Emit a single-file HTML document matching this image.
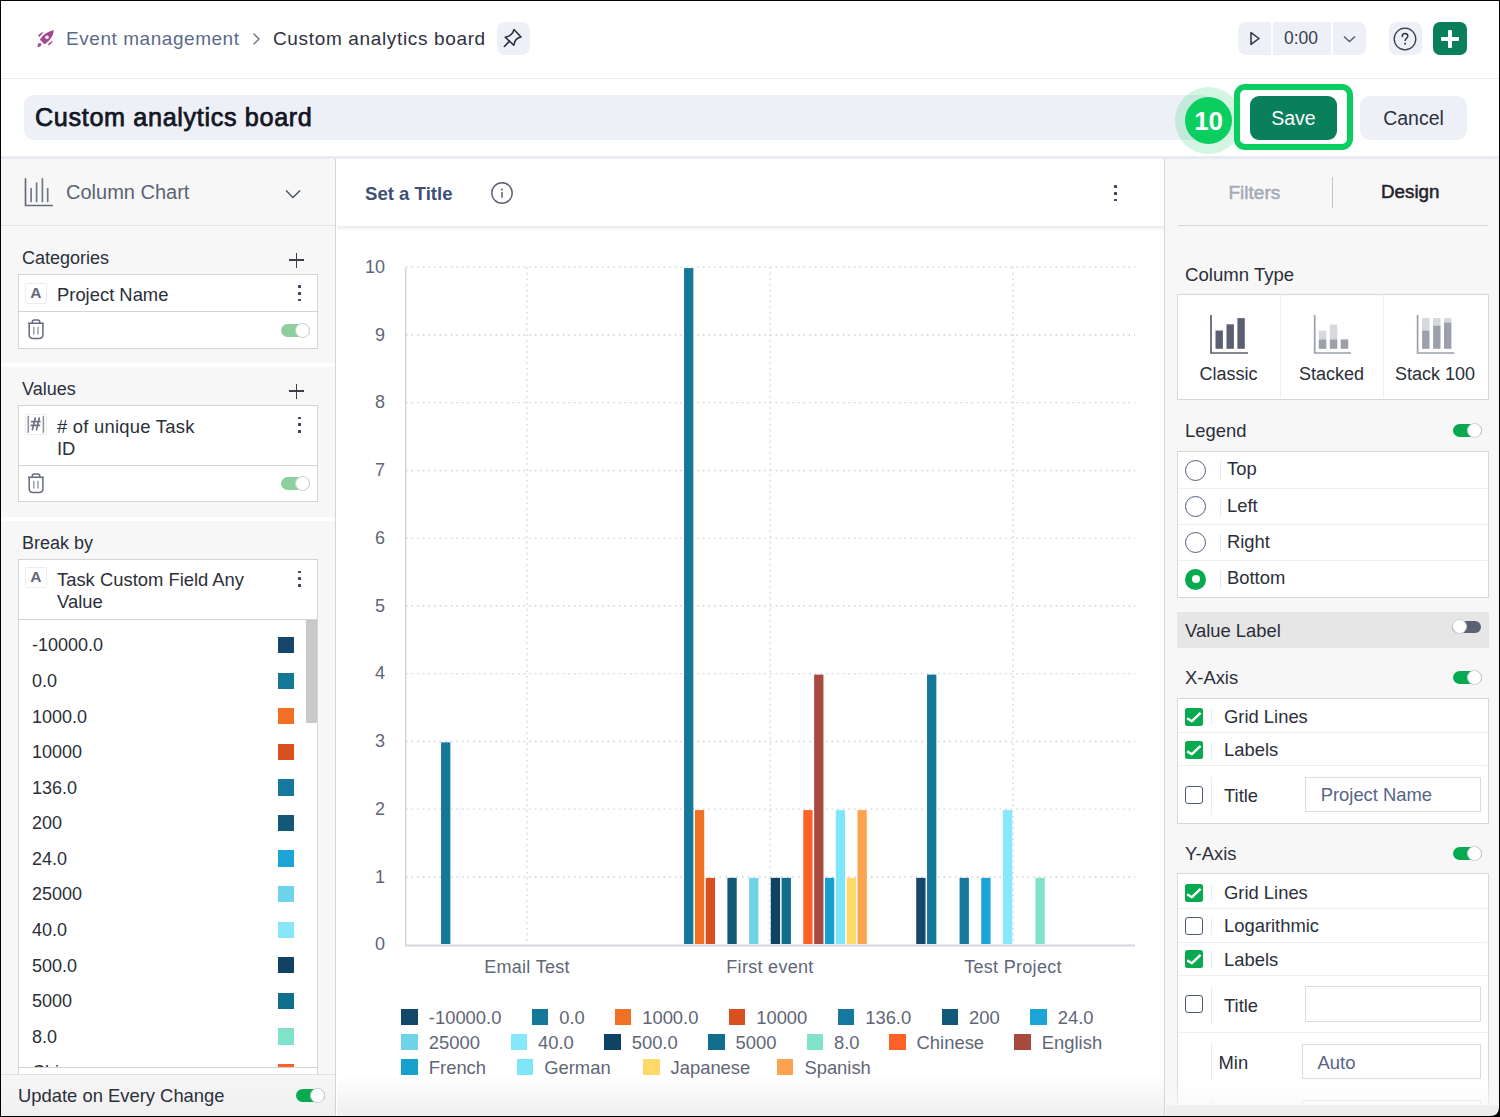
<!DOCTYPE html><html><head><meta charset="utf-8"><style>
*{box-sizing:border-box;margin:0;padding:0}
html,body{width:1500px;height:1117px;overflow:hidden;background:#fff}
body{position:relative;font-family:"Liberation Sans",sans-serif;color:#2b2f3a}
.a{position:absolute}
.t{position:absolute;white-space:nowrap;line-height:1}
</style></head><body>
<div class="a" style="left:0;top:78px;width:1500px;height:1px;background:#e6eaf1"></div>
<svg class="a" style="left:32px;top:25px" width="28" height="28" viewBox="0 0 28 28">
<path d="M21.9 5.3 C15.5 6.2 10.8 10 7.9 14.8 L12.4 19.3 C17 16.6 21 12 21.9 5.3 Z" fill="#a14a91"/>
<circle cx="15" cy="12.3" r="1.75" fill="#fff"/>
<path d="M6.1 10.9 C7.2 8.9 9.2 7.4 11.7 7.1 L7.3 11.9 Z" fill="#a14a91"/>
<path d="M20.7 15.2 C20.4 17.6 18.9 19.4 16.7 20.3 L15.9 19.3 Z" fill="#a14a91"/>
<path d="M5.6 21.9 C5.4 19.9 6.2 18.1 7.8 18 C9 18.1 9.6 19.2 9.2 20.3 C8.7 21.5 7.2 22 5.6 21.9 Z" fill="#a14a91"/>
</svg>
<div class="t" style="left:66px;top:29px;font-size:19px;color:#5b6a8b;letter-spacing:0.55px">Event management</div>
<svg class="a" style="left:251px;top:32px" width="10" height="14" viewBox="0 0 10 14"><path d="M2.5 1.5 L8 7 L2.5 12.5" fill="none" stroke="#6b7690" stroke-width="1.4"/></svg>
<div class="t" style="left:273px;top:29px;font-size:19px;color:#2e3140;letter-spacing:0.65px">Custom analytics board</div>
<div class="a" style="left:496.5px;top:22px;width:33px;height:33px;border-radius:8px;background:#edf0f7"></div>
<svg class="a" style="left:495px;top:20px" width="38" height="38" viewBox="0 0 38 38">
<path d="M18.9 9.6 L26 17 C23.8 17.2 22.8 17.9 21.3 19.4 C19.8 20.9 19.2 22 18.8 25.3 L10.2 17.2 C13.5 16.6 14.6 16 16.1 14.5 C17.6 13 18.4 12 18.9 9.6 Z" fill="none" stroke="#262938" stroke-width="1.5" stroke-linejoin="round"/>
<path d="M14.4 21.4 L9.3 26.5" stroke="#262938" stroke-width="1.5" stroke-linecap="round"/>
</svg>
<div class="a" style="left:1238px;top:22px;width:128px;height:33px;border-radius:8px;background:#edf0f7"></div>
<div class="a" style="left:1271px;top:22px;width:2px;height:33px;background:#fff"></div>
<div class="a" style="left:1331px;top:22px;width:2px;height:33px;background:#fff"></div>
<svg class="a" style="left:1248px;top:30px" width="14" height="17" viewBox="0 0 14 17"><path d="M3 2.6 L11 8.5 L3 14.4 Z" fill="none" stroke="#2e3140" stroke-width="1.5" stroke-linejoin="round"/></svg>
<div class="t" style="left:1284px;top:30px;font-size:17.5px;color:#3a3e4c">0:00</div>
<svg class="a" style="left:1342px;top:34px" width="15" height="10" viewBox="0 0 15 10"><path d="M2 2.5 L7.5 7.5 L13 2.5" fill="none" stroke="#555a68" stroke-width="1.4"/></svg>
<div class="a" style="left:1389px;top:22px;width:33px;height:33px;border-radius:8px;background:#edf0f7"></div>
<svg class="a" style="left:1393px;top:27px" width="24" height="24" viewBox="0 0 24 24"><circle cx="12" cy="12" r="10.8" fill="none" stroke="#373a47" stroke-width="1.3"/><path d="M9.2 9.4 C9.2 7.6 10.5 6.6 12 6.6 C13.6 6.6 14.8 7.6 14.8 9.2 C14.8 11.2 12.2 11.4 12.2 13.6" fill="none" stroke="#2e3140" stroke-width="1.5" stroke-linecap="round"/><circle cx="12.1" cy="16.8" r="1" fill="#2e3140"/></svg>
<div class="a" style="left:1433px;top:22px;width:34px;height:33px;border-radius:7px;background:#0a7f5c"></div>
<div class="a" style="left:1441px;top:37px;width:18px;height:3.6px;background:#fff;border-radius:1px"></div>
<div class="a" style="left:1448.2px;top:30px;width:3.6px;height:18px;background:#fff;border-radius:1px"></div>
<div class="a" style="left:24px;top:95.3px;width:1188px;height:44.5px;border-radius:10px;background:#edf0f7"></div>
<div class="t" style="left:35px;top:104.5px;font-size:25.2px;color:#141624;letter-spacing:0.65px;-webkit-text-stroke:0.75px #141624">Custom analytics board</div>
<div class="a" style="left:1175px;top:87px;width:67px;height:67px;border-radius:50%;background:rgba(10,207,96,0.18)"></div>
<div class="a" style="left:1185px;top:97px;width:47px;height:47px;border-radius:50%;background:#0acf60"></div>
<div class="t" style="left:1185px;top:107.6px;width:47px;text-align:center;font-size:26px;font-weight:bold;color:#fff;letter-spacing:-0.3px">10</div>
<div class="a" style="left:1234px;top:84px;width:119px;height:66px;border:6px solid #0acf60;border-radius:11px;background:#fff"></div>
<div class="a" style="left:1250px;top:95.5px;width:87px;height:44px;border-radius:9px;background:#0a7f5c"></div>
<div class="t" style="left:1250px;top:109px;width:87px;text-align:center;font-size:19.5px;color:#fff">Save</div>
<div class="a" style="left:1360px;top:95.5px;width:107px;height:44px;border-radius:10px;background:#edf0f7"></div>
<div class="t" style="left:1360px;top:109px;width:107px;text-align:center;font-size:19.5px;color:#2e3140">Cancel</div>
<div class="a" style="left:0;top:156px;width:1500px;height:3px;background:#e8ebf1"></div>
<div class="a" style="left:0;top:159px;width:335px;height:958px;background:#f7f7f7"></div>
<div class="a" style="left:335px;top:159px;width:1.2px;height:958px;background:#d4d4d4"></div>
<svg class="a" style="left:23px;top:177px" width="32" height="31" viewBox="0 0 32 31">
<path d="M2.5 1.8 V28.5 H29.2" fill="none" stroke="#656b7b" stroke-width="1.7" stroke-linecap="round" stroke-linejoin="round"/>
<path d="M8.1 11.6 V24.5 M13.6 6 V24.5 M19.4 1.9 V24.5 M24.7 11.6 V24.5" fill="none" stroke="#737987" stroke-width="1.7" stroke-linecap="round"/>
</svg>
<div class="t" style="left:66px;top:182px;font-size:20px;color:#5b6272">Column Chart</div>
<svg class="a" style="left:284px;top:188px" width="18" height="12" viewBox="0 0 18 12"><path d="M2 2.5 L9 9.5 L16 2.5" fill="none" stroke="#4d5464" stroke-width="1.5"/></svg>
<div class="a" style="left:0;top:225px;width:335px;height:1px;background:#e2e2e2"></div>
<div class="t" style="left:22px;top:249px;font-size:18px;color:#2b2f3a">Categories</div>
<div class="a" style="left:289.0px;top:259.25px;width:15px;height:1.5px;background:#3d3f48"></div>
<div class="a" style="left:295.75px;top:252.5px;width:1.5px;height:15px;background:#3d3f48"></div>
<div class="a" style="left:18px;top:274px;width:300px;height:75px;border:1px solid #d5d5d5;background:#fff"></div>
<div class="a" style="left:18px;top:311px;width:300px;height:1px;background:#d5d5d5"></div>
<div class="a" style="left:25px;top:282.5px;width:21.5px;height:21px;border:1px solid #ececec;border-radius:1.5px;background:#fff"></div>
<div class="t" style="left:25px;top:284.9px;width:21.5px;text-align:center;font-size:15.5px;font-weight:bold;color:#626776">A</div>
<div class="t" style="left:57px;top:286px;font-size:18.4px;color:#2b2f3a">Project Name</div>
<div class="a" style="left:298.3px;top:285.0px;width:2.7px;height:2.7px;background:#3d4460;border-radius:0.5px"></div>
<div class="a" style="left:298.3px;top:291.9px;width:2.7px;height:2.7px;background:#3d4460;border-radius:0.5px"></div>
<div class="a" style="left:298.3px;top:298.79999999999995px;width:2.7px;height:2.7px;background:#3d4460;border-radius:0.5px"></div>
<svg class="a" style="left:27px;top:318px" width="18" height="22" viewBox="0 0 18 22">
<path d="M1 5.3 H16.8 M5.3 5.3 V4 Q5.3 2.1 7.3 2.1 H10.8 Q12.8 2.1 12.8 4 V5.3 M2.2 5.3 V16.5 Q2.2 20.5 6.2 20.5 H11.9 Q15.9 20.5 15.9 16.5 V5.3" fill="none" stroke="#656b7c" stroke-width="1.5"/>
<path d="M6.8 8.7 V16.5 M11 8.7 V16.5" fill="none" stroke="#9a9fab" stroke-width="1.5"/>
</svg>
<div class="a" style="left:281px;top:324px;width:29px;height:13px;border-radius:6.5px;background:#8ed09d"></div>
<div class="a" style="left:294.5px;top:323.0px;width:15px;height:15px;border-radius:50%;background:#fff;border:1.2px solid #cdd0d6"></div>
<div class="a" style="left:0;top:363px;width:335px;height:4px;background:#fff"></div>
<div class="t" style="left:22px;top:380px;font-size:18px;color:#2b2f3a">Values</div>
<div class="a" style="left:289.0px;top:390.25px;width:15px;height:1.5px;background:#3d3f48"></div>
<div class="a" style="left:295.75px;top:383.5px;width:1.5px;height:15px;background:#3d3f48"></div>
<div class="a" style="left:18px;top:405px;width:300px;height:97px;border:1px solid #d5d5d5;background:#fff"></div>
<div class="a" style="left:18px;top:465px;width:300px;height:1px;background:#d5d5d5"></div>
<div class="a" style="left:25px;top:413.5px;width:21.5px;height:21px;border:1px solid #ececec;border-radius:1.5px;background:#fff"></div>
<svg class="a" style="left:20px;top:408px" width="32" height="32" viewBox="0 0 32 32">
<path d="M8.3 8.6 V24.2 M23.4 8.6 V24.2" stroke="#8f94a0" stroke-width="1.6" stroke-linecap="round"/>
<path d="M15.2 10.2 L12.4 21.6 M19.3 10.2 L16.5 21.6 M11.6 13.6 H20 M11.2 17.4 H19.6" stroke="#6f7483" stroke-width="1.7" stroke-linecap="round"/>
</svg>
<div class="t" style="left:57px;top:416px;font-size:18.4px;color:#2b2f3a;line-height:22px;letter-spacing:0.25px">&#35; of unique Task</div>
<div class="t" style="left:57px;top:438px;font-size:18.4px;color:#2b2f3a;line-height:22px">ID</div>
<div class="a" style="left:298.3px;top:416.5px;width:2.7px;height:2.7px;background:#3d4460;border-radius:0.5px"></div>
<div class="a" style="left:298.3px;top:423.4px;width:2.7px;height:2.7px;background:#3d4460;border-radius:0.5px"></div>
<div class="a" style="left:298.3px;top:430.29999999999995px;width:2.7px;height:2.7px;background:#3d4460;border-radius:0.5px"></div>
<svg class="a" style="left:27px;top:472px" width="18" height="22" viewBox="0 0 18 22">
<path d="M1 5.3 H16.8 M5.3 5.3 V4 Q5.3 2.1 7.3 2.1 H10.8 Q12.8 2.1 12.8 4 V5.3 M2.2 5.3 V16.5 Q2.2 20.5 6.2 20.5 H11.9 Q15.9 20.5 15.9 16.5 V5.3" fill="none" stroke="#656b7c" stroke-width="1.5"/>
<path d="M6.8 8.7 V16.5 M11 8.7 V16.5" fill="none" stroke="#9a9fab" stroke-width="1.5"/>
</svg>
<div class="a" style="left:281px;top:477px;width:29px;height:13px;border-radius:6.5px;background:#8ed09d"></div>
<div class="a" style="left:294.5px;top:476.0px;width:15px;height:15px;border-radius:50%;background:#fff;border:1.2px solid #cdd0d6"></div>
<div class="a" style="left:0;top:517px;width:335px;height:4px;background:#fff"></div>
<div class="t" style="left:22px;top:534px;font-size:18px;color:#2b2f3a">Break by</div>
<div class="a" style="left:18px;top:559px;width:300px;height:520px;border:1px solid #d5d5d5;background:#fff"></div>
<div class="a" style="left:18px;top:619px;width:300px;height:1px;background:#d5d5d5"></div>
<div class="a" style="left:25px;top:567px;width:21.5px;height:21px;border:1px solid #ececec;border-radius:1.5px;background:#fff"></div>
<div class="t" style="left:25px;top:569.4px;width:21.5px;text-align:center;font-size:15.5px;font-weight:bold;color:#626776">A</div>
<div class="t" style="left:57px;top:568.5px;font-size:18.4px;color:#2b2f3a;line-height:22px">Task Custom Field Any</div>
<div class="t" style="left:57px;top:590.5px;font-size:18.4px;color:#2b2f3a;line-height:22px">Value</div>
<div class="a" style="left:298.3px;top:570.5px;width:2.7px;height:2.7px;background:#3d4460;border-radius:0.5px"></div>
<div class="a" style="left:298.3px;top:577.4px;width:2.7px;height:2.7px;background:#3d4460;border-radius:0.5px"></div>
<div class="a" style="left:298.3px;top:584.3px;width:2.7px;height:2.7px;background:#3d4460;border-radius:0.5px"></div>
<div class="a" style="left:19px;top:620px;width:298px;height:447px;overflow:hidden">
<div class="t" style="left:13px;top:16.399999999999977px;font-size:18px;color:#2b2f3a">-10000.0</div>
<div class="a" style="left:259px;top:17.0px;width:16.2px;height:16.2px;background:#13486a"></div>
<div class="t" style="left:13px;top:51.98000000000002px;font-size:18px;color:#2b2f3a">0.0</div>
<div class="a" style="left:259px;top:52.58000000000004px;width:16.2px;height:16.2px;background:#157898"></div>
<div class="t" style="left:13px;top:87.55999999999995px;font-size:18px;color:#2b2f3a">1000.0</div>
<div class="a" style="left:259px;top:88.15999999999997px;width:16.2px;height:16.2px;background:#f07024"></div>
<div class="t" style="left:13px;top:123.13999999999999px;font-size:18px;color:#2b2f3a">10000</div>
<div class="a" style="left:259px;top:123.74000000000001px;width:16.2px;height:16.2px;background:#d94f1f"></div>
<div class="t" style="left:13px;top:158.72000000000003px;font-size:18px;color:#2b2f3a">136.0</div>
<div class="a" style="left:259px;top:159.32000000000005px;width:16.2px;height:16.2px;background:#17789f"></div>
<div class="t" style="left:13px;top:194.29999999999995px;font-size:18px;color:#2b2f3a">200</div>
<div class="a" style="left:259px;top:194.89999999999998px;width:16.2px;height:16.2px;background:#115977"></div>
<div class="t" style="left:13px;top:229.88px;font-size:18px;color:#2b2f3a">24.0</div>
<div class="a" style="left:259px;top:230.48000000000002px;width:16.2px;height:16.2px;background:#1ca4d6"></div>
<div class="t" style="left:13px;top:265.46000000000004px;font-size:18px;color:#2b2f3a">25000</div>
<div class="a" style="left:259px;top:266.06000000000006px;width:16.2px;height:16.2px;background:#6fd3ea"></div>
<div class="t" style="left:13px;top:301.03999999999996px;font-size:18px;color:#2b2f3a">40.0</div>
<div class="a" style="left:259px;top:301.64px;width:16.2px;height:16.2px;background:#87e7fb"></div>
<div class="t" style="left:13px;top:336.6199999999999px;font-size:18px;color:#2b2f3a">500.0</div>
<div class="a" style="left:259px;top:337.2199999999999px;width:16.2px;height:16.2px;background:#0f4263"></div>
<div class="t" style="left:13px;top:372.19999999999993px;font-size:18px;color:#2b2f3a">5000</div>
<div class="a" style="left:259px;top:372.79999999999995px;width:16.2px;height:16.2px;background:#126e8f"></div>
<div class="t" style="left:13px;top:407.78px;font-size:18px;color:#2b2f3a">8.0</div>
<div class="a" style="left:259px;top:408.3800000000001px;width:16.2px;height:16.2px;background:#80e3c9"></div>
<div class="t" style="left:13px;top:443.3599999999999px;font-size:18px;color:#2b2f3a">Chinese</div>
<div class="a" style="left:259px;top:443.96000000000004px;width:16.2px;height:16.2px;background:#fd6128"></div>
<div class="a" style="left:287px;top:0;width:11px;height:103px;background:#c9c9c9"></div>
</div>
<div class="a" style="left:19px;top:1067px;width:298px;height:1px;background:#d5d5d5"></div>
<div class="a" style="left:0;top:1074px;width:335px;height:43px;background:linear-gradient(#f6f6f6,#f0f0f0);border-top:1px solid #e0e0e0"></div>
<div class="t" style="left:18px;top:1087px;font-size:18.4px;color:#2b2f3a">Update on Every Change</div>
<div class="a" style="left:296px;top:1089px;width:29px;height:13px;border-radius:6.5px;background:#08aa50"></div>
<div class="a" style="left:309.5px;top:1088.0px;width:15px;height:15px;border-radius:50%;background:#fff;border:1.2px solid #cdd0d6"></div>
<div class="t" style="left:365px;top:185px;font-size:18.6px;font-weight:bold;color:#3d5078">Set a Title</div>
<svg class="a" style="left:489px;top:180px" width="26" height="26" viewBox="0 0 26 26"><circle cx="13" cy="13" r="10.2" fill="none" stroke="#5a6070" stroke-width="1.4"/><circle cx="13" cy="9.4" r="1" fill="#5a6070"/><path d="M13 12 V17.8" stroke="#5a6070" stroke-width="1.5"/></svg>
<div class="a" style="left:1114.3px;top:185.0px;width:2.7px;height:2.7px;background:#3d4460;border-radius:0.5px"></div>
<div class="a" style="left:1114.3px;top:191.9px;width:2.7px;height:2.7px;background:#3d4460;border-radius:0.5px"></div>
<div class="a" style="left:1114.3px;top:198.8px;width:2.7px;height:2.7px;background:#3d4460;border-radius:0.5px"></div>
<div class="a" style="left:336.5px;top:226px;width:828px;height:5px;background:linear-gradient(#e9ebef,#ffffff)"></div>
<svg class="a" style="left:0;top:0" width="1500" height="1117" viewBox="0 0 1500 1117">
<line x1="406" y1="877.0" x2="1135" y2="877.0" stroke="#d0d2d8" stroke-width="1.3" stroke-dasharray="1.6 4"/>
<line x1="406" y1="809.2" x2="1135" y2="809.2" stroke="#d0d2d8" stroke-width="1.3" stroke-dasharray="1.6 4"/>
<line x1="406" y1="741.5" x2="1135" y2="741.5" stroke="#d0d2d8" stroke-width="1.3" stroke-dasharray="1.6 4"/>
<line x1="406" y1="673.7" x2="1135" y2="673.7" stroke="#d0d2d8" stroke-width="1.3" stroke-dasharray="1.6 4"/>
<line x1="406" y1="606.0" x2="1135" y2="606.0" stroke="#d0d2d8" stroke-width="1.3" stroke-dasharray="1.6 4"/>
<line x1="406" y1="538.2" x2="1135" y2="538.2" stroke="#d0d2d8" stroke-width="1.3" stroke-dasharray="1.6 4"/>
<line x1="406" y1="470.5" x2="1135" y2="470.5" stroke="#d0d2d8" stroke-width="1.3" stroke-dasharray="1.6 4"/>
<line x1="406" y1="402.7" x2="1135" y2="402.7" stroke="#d0d2d8" stroke-width="1.3" stroke-dasharray="1.6 4"/>
<line x1="406" y1="335.0" x2="1135" y2="335.0" stroke="#d0d2d8" stroke-width="1.3" stroke-dasharray="1.6 4"/>
<line x1="406" y1="267.2" x2="1135" y2="267.2" stroke="#d0d2d8" stroke-width="1.3" stroke-dasharray="1.6 4"/>
<line x1="527" y1="267.2" x2="527" y2="944.7" stroke="#d0d2d8" stroke-width="1.3" stroke-dasharray="1.6 4"/>
<line x1="770" y1="267.2" x2="770" y2="944.7" stroke="#d0d2d8" stroke-width="1.3" stroke-dasharray="1.6 4"/>
<line x1="1013" y1="267.2" x2="1013" y2="944.7" stroke="#d0d2d8" stroke-width="1.3" stroke-dasharray="1.6 4"/>
<line x1="405.7" y1="267.2" x2="405.7" y2="945.7" stroke="#d2d3dc" stroke-width="1.4"/>
<line x1="405" y1="945.5" x2="1135" y2="945.5" stroke="#d6d7de" stroke-width="1.8"/>
<rect x="441.05" y="742.35" width="9.3" height="201.65" fill="#157898"/>
<rect x="684.05" y="268.10" width="9.3" height="675.90" fill="#157898"/>
<rect x="694.89" y="810.10" width="9.3" height="133.90" fill="#f07024"/>
<rect x="705.73" y="877.85" width="9.3" height="66.15" fill="#d94f1f"/>
<rect x="727.41" y="877.85" width="9.3" height="66.15" fill="#115977"/>
<rect x="749.09" y="877.85" width="9.3" height="66.15" fill="#6fd3ea"/>
<rect x="770.77" y="877.85" width="9.3" height="66.15" fill="#0f4263"/>
<rect x="781.61" y="877.85" width="9.3" height="66.15" fill="#126e8f"/>
<rect x="803.29" y="810.10" width="9.3" height="133.90" fill="#fd6128"/>
<rect x="814.13" y="674.60" width="9.3" height="269.40" fill="#a84a40"/>
<rect x="824.97" y="877.85" width="9.3" height="66.15" fill="#16a0cc"/>
<rect x="835.81" y="810.10" width="9.3" height="133.90" fill="#7fe6fa"/>
<rect x="846.65" y="877.85" width="9.3" height="66.15" fill="#fed96a"/>
<rect x="857.49" y="810.10" width="9.3" height="133.90" fill="#fda350"/>
<rect x="916.21" y="877.85" width="9.3" height="66.15" fill="#13486a"/>
<rect x="927.05" y="674.60" width="9.3" height="269.40" fill="#157898"/>
<rect x="959.57" y="877.85" width="9.3" height="66.15" fill="#17789f"/>
<rect x="981.25" y="877.85" width="9.3" height="66.15" fill="#1ca4d6"/>
<rect x="1002.93" y="810.10" width="9.3" height="133.90" fill="#87e7fb"/>
<rect x="1035.45" y="877.85" width="9.3" height="66.15" fill="#80e3c9"/>
</svg>
<div class="t" style="left:340px;top:935.3px;width:45px;text-align:right;font-size:18px;color:#5f6677">0</div>
<div class="t" style="left:340px;top:867.6px;width:45px;text-align:right;font-size:18px;color:#5f6677">1</div>
<div class="t" style="left:340px;top:799.8px;width:45px;text-align:right;font-size:18px;color:#5f6677">2</div>
<div class="t" style="left:340px;top:732.1px;width:45px;text-align:right;font-size:18px;color:#5f6677">3</div>
<div class="t" style="left:340px;top:664.3px;width:45px;text-align:right;font-size:18px;color:#5f6677">4</div>
<div class="t" style="left:340px;top:596.6px;width:45px;text-align:right;font-size:18px;color:#5f6677">5</div>
<div class="t" style="left:340px;top:528.8px;width:45px;text-align:right;font-size:18px;color:#5f6677">6</div>
<div class="t" style="left:340px;top:461.1px;width:45px;text-align:right;font-size:18px;color:#5f6677">7</div>
<div class="t" style="left:340px;top:393.3px;width:45px;text-align:right;font-size:18px;color:#5f6677">8</div>
<div class="t" style="left:340px;top:325.6px;width:45px;text-align:right;font-size:18px;color:#5f6677">9</div>
<div class="t" style="left:340px;top:257.8px;width:45px;text-align:right;font-size:18px;color:#5f6677">10</div>
<div class="t" style="left:447px;top:958px;width:160px;text-align:center;font-size:18px;color:#5f6677;letter-spacing:0.3px">Email Test</div>
<div class="t" style="left:690px;top:958px;width:160px;text-align:center;font-size:18px;color:#5f6677;letter-spacing:0.3px">First event</div>
<div class="t" style="left:933px;top:958px;width:160px;text-align:center;font-size:18px;color:#5f6677;letter-spacing:0.3px">Test Project</div>
<div class="a" style="left:401.3px;top:1008.7px;width:16.5px;height:16.5px;background:#13486a"></div>
<div class="t" style="left:428.8px;top:1008.7px;font-size:18.4px;color:#5f6677">-10000.0</div>
<div class="a" style="left:531.7px;top:1008.7px;width:16.5px;height:16.5px;background:#157898"></div>
<div class="t" style="left:559.2px;top:1008.7px;font-size:18.4px;color:#5f6677">0.0</div>
<div class="a" style="left:614.7px;top:1008.7px;width:16.5px;height:16.5px;background:#f07024"></div>
<div class="t" style="left:642.2px;top:1008.7px;font-size:18.4px;color:#5f6677">1000.0</div>
<div class="a" style="left:728.7px;top:1008.7px;width:16.5px;height:16.5px;background:#d94f1f"></div>
<div class="t" style="left:756.2px;top:1008.7px;font-size:18.4px;color:#5f6677">10000</div>
<div class="a" style="left:837.7px;top:1008.7px;width:16.5px;height:16.5px;background:#17789f"></div>
<div class="t" style="left:865.2px;top:1008.7px;font-size:18.4px;color:#5f6677">136.0</div>
<div class="a" style="left:941.6px;top:1008.7px;width:16.5px;height:16.5px;background:#115977"></div>
<div class="t" style="left:969.1px;top:1008.7px;font-size:18.4px;color:#5f6677">200</div>
<div class="a" style="left:1030.2px;top:1008.7px;width:16.5px;height:16.5px;background:#1ca4d6"></div>
<div class="t" style="left:1057.7px;top:1008.7px;font-size:18.4px;color:#5f6677">24.0</div>
<div class="a" style="left:401.3px;top:1033.8px;width:16.5px;height:16.5px;background:#6fd3ea"></div>
<div class="t" style="left:428.8px;top:1033.8px;font-size:18.4px;color:#5f6677">25000</div>
<div class="a" style="left:510.5px;top:1033.8px;width:16.5px;height:16.5px;background:#87e7fb"></div>
<div class="t" style="left:538.0px;top:1033.8px;font-size:18.4px;color:#5f6677">40.0</div>
<div class="a" style="left:604.2px;top:1033.8px;width:16.5px;height:16.5px;background:#0f4263"></div>
<div class="t" style="left:631.7px;top:1033.8px;font-size:18.4px;color:#5f6677">500.0</div>
<div class="a" style="left:708px;top:1033.8px;width:16.5px;height:16.5px;background:#126e8f"></div>
<div class="t" style="left:735.5px;top:1033.8px;font-size:18.4px;color:#5f6677">5000</div>
<div class="a" style="left:806.5px;top:1033.8px;width:16.5px;height:16.5px;background:#80e3c9"></div>
<div class="t" style="left:834.0px;top:1033.8px;font-size:18.4px;color:#5f6677">8.0</div>
<div class="a" style="left:889.1px;top:1033.8px;width:16.5px;height:16.5px;background:#fd6128"></div>
<div class="t" style="left:916.6px;top:1033.8px;font-size:18.4px;color:#5f6677">Chinese</div>
<div class="a" style="left:1014.3px;top:1033.8px;width:16.5px;height:16.5px;background:#a84a40"></div>
<div class="t" style="left:1041.8px;top:1033.8px;font-size:18.4px;color:#5f6677">English</div>
<div class="a" style="left:401.3px;top:1058.8px;width:16.5px;height:16.5px;background:#16a0cc"></div>
<div class="t" style="left:428.8px;top:1058.8px;font-size:18.4px;color:#5f6677">French</div>
<div class="a" style="left:516.7px;top:1058.8px;width:16.5px;height:16.5px;background:#7fe6fa"></div>
<div class="t" style="left:544.2px;top:1058.8px;font-size:18.4px;color:#5f6677">German</div>
<div class="a" style="left:643px;top:1058.8px;width:16.5px;height:16.5px;background:#fed96a"></div>
<div class="t" style="left:670.5px;top:1058.8px;font-size:18.4px;color:#5f6677">Japanese</div>
<div class="a" style="left:776.9px;top:1058.8px;width:16.5px;height:16.5px;background:#fda350"></div>
<div class="t" style="left:804.4px;top:1058.8px;font-size:18.4px;color:#5f6677">Spanish</div>
<div class="a" style="left:336.5px;top:1074px;width:828px;height:43px;background:linear-gradient(rgba(242,242,242,0),rgba(239,239,239,1))"></div>
<div class="a" style="left:1164px;top:159px;width:1.3px;height:958px;background:#d6d6d6"></div>
<div class="a" style="left:1165.3px;top:159px;width:335px;height:958px;background:#f7f7f7"></div>
<div class="t" style="left:1228.5px;top:183px;font-size:19px;color:#a4aab6;-webkit-text-stroke:0.5px #a4aab6">Filters</div>
<div class="a" style="left:1331.5px;top:177px;width:1.5px;height:31px;background:#c4c4c4"></div>
<div class="t" style="left:1381px;top:183px;font-size:18.8px;color:#1f222b;-webkit-text-stroke:0.5px #1f222b">Design</div>
<div class="a" style="left:1178px;top:225.3px;width:310px;height:1.2px;background:#d6d6d6"></div>
<div class="t" style="left:1185px;top:265.5px;font-size:18.6px;color:#2b2f3a">Column Type</div>
<div class="a" style="left:1176.5px;top:293.5px;width:312px;height:106px;border:1.3px solid #d8d8d8;background:#fff"></div>
<div class="a" style="left:1280px;top:295px;width:1px;height:103px;background:#efefef"></div>
<div class="a" style="left:1383px;top:295px;width:1px;height:103px;background:#efefef"></div>
<svg class="a" style="left:0;top:0" width="1500" height="1117" viewBox="0 0 1500 1117">
<path d="M1211 315 V353 H1248" fill="none" stroke="#5a6070" stroke-width="1.7"/>
<rect x="1215.5" y="330.5" width="7.4" height="18.30000000000001" fill="#5a6070"/>
<rect x="1226.5" y="324.3" width="7.4" height="24.5" fill="#5a6070"/>
<rect x="1237.4" y="318.1" width="7.4" height="30.69999999999999" fill="#5a6070"/>
<path d="M1314.7 315 V353 H1351" fill="none" stroke="#9ba0aa" stroke-width="1.7"/>
<rect x="1318.8" y="330.7" width="7.5" height="8.699999999999989" fill="#d6d8dd"/>
<rect x="1329.8" y="324.5" width="7.5" height="14.899999999999977" fill="#d6d8dd"/>
<rect x="1318.8" y="339.4" width="7.5" height="9.4" fill="#9ba0aa"/>
<rect x="1329.8" y="339.4" width="7.5" height="9.4" fill="#9ba0aa"/>
<rect x="1340.7" y="339.4" width="7.5" height="9.4" fill="#9ba0aa"/>
<path d="M1417.6 315 V353 H1454.4" fill="none" stroke="#9ba0aa" stroke-width="1.7"/>
<rect x="1422.1" y="318.1" width="7.4" height="12.399999999999977" fill="#d6d8dd"/>
<rect x="1422.1" y="330.5" width="7.4" height="18.30000000000001" fill="#9ba0aa"/>
<rect x="1433.1" y="318.1" width="7.4" height="7.5" fill="#d6d8dd"/>
<rect x="1433.1" y="325.6" width="7.4" height="23.19999999999999" fill="#9ba0aa"/>
<rect x="1444" y="318.1" width="7.4" height="4.399999999999977" fill="#d6d8dd"/>
<rect x="1444" y="322.5" width="7.4" height="26.30000000000001" fill="#9ba0aa"/>
</svg>
<div class="t" style="left:1168.6px;top:364.5px;width:120px;text-align:center;font-size:18px;color:#2b2f3a">Classic</div>
<div class="t" style="left:1271.6px;top:364.5px;width:120px;text-align:center;font-size:18px;color:#2b2f3a">Stacked</div>
<div class="t" style="left:1375px;top:364.5px;width:120px;text-align:center;font-size:18px;color:#2b2f3a">Stack 100</div>
<div class="t" style="left:1185px;top:422px;font-size:18.4px;color:#2b2f3a">Legend</div>
<div class="a" style="left:1453px;top:423.5px;width:29px;height:13px;border-radius:6.5px;background:#08aa50"></div>
<div class="a" style="left:1466.5px;top:422.5px;width:15px;height:15px;border-radius:50%;background:#fff;border:1.2px solid #cdd0d6"></div>
<div class="a" style="left:1176.5px;top:450.5px;width:312px;height:147px;border:1.3px solid #d8d8d8;background:#fff"></div>
<div class="a" style="left:1178px;top:487.5px;width:309px;height:1px;background:#efefef"></div>
<div class="a" style="left:1178px;top:524px;width:309px;height:1px;background:#efefef"></div>
<div class="a" style="left:1178px;top:560px;width:309px;height:1px;background:#efefef"></div>
<div class="a" style="left:1185.2px;top:459.79999999999995px;width:21.2px;height:21.2px;border-radius:50%;border:1.8px solid #515c79;background:#fff"></div>
<div class="a" style="left:1220px;top:461.4px;width:1px;height:18px;background:#e8e8e8"></div>
<div class="t" style="left:1227px;top:460.4px;font-size:18.4px;color:#2b2f3a">Top</div>
<div class="a" style="left:1185.2px;top:496.09999999999997px;width:21.2px;height:21.2px;border-radius:50%;border:1.8px solid #515c79;background:#fff"></div>
<div class="a" style="left:1220px;top:497.7px;width:1px;height:18px;background:#e8e8e8"></div>
<div class="t" style="left:1227px;top:496.7px;font-size:18.4px;color:#2b2f3a">Left</div>
<div class="a" style="left:1185.2px;top:532.3px;width:21.2px;height:21.2px;border-radius:50%;border:1.8px solid #515c79;background:#fff"></div>
<div class="a" style="left:1220px;top:533.9px;width:1px;height:18px;background:#e8e8e8"></div>
<div class="t" style="left:1227px;top:532.9px;font-size:18.4px;color:#2b2f3a">Right</div>
<div class="a" style="left:1185.2px;top:568.6px;width:21.2px;height:21.2px;border-radius:50%;background:#08aa50"></div>
<div class="a" style="left:1191.8px;top:575.2px;width:8px;height:8px;border-radius:50%;background:#fff"></div>
<div class="a" style="left:1220px;top:570.2px;width:1px;height:18px;background:#e8e8e8"></div>
<div class="t" style="left:1227px;top:569.2px;font-size:18.4px;color:#2b2f3a">Bottom</div>
<div class="a" style="left:1176.5px;top:611.8px;width:312px;height:36px;background:#e6e6e6"></div>
<div class="t" style="left:1185px;top:621.5px;font-size:18.4px;color:#2b2f3a">Value Label</div>
<div class="a" style="left:1452px;top:621px;width:28.5px;height:11.8px;border-radius:5.9px;background:#5b6273"></div>
<div class="a" style="left:1451.5px;top:619.4px;width:15px;height:15px;border-radius:50%;background:#fff;border:1.2px solid #cdd0d6"></div>
<div class="t" style="left:1185px;top:668.7px;font-size:18.4px;color:#2b2f3a">X-Axis</div>
<div class="a" style="left:1453px;top:670.8px;width:29px;height:13px;border-radius:6.5px;background:#08aa50"></div>
<div class="a" style="left:1466.5px;top:669.8px;width:15px;height:15px;border-radius:50%;background:#fff;border:1.2px solid #cdd0d6"></div>
<div class="a" style="left:1176.5px;top:697.5px;width:312px;height:126px;border:1.3px solid #d8d8d8;background:#fff"></div>
<div class="a" style="left:1178px;top:732px;width:309px;height:1px;background:#efefef"></div>
<div class="a" style="left:1178px;top:765px;width:309px;height:1px;background:#efefef"></div>
<div class="a" style="left:1185.4px;top:707.6px;width:18px;height:18px;border-radius:2.5px;background:#08aa50"></div>
<svg class="a" style="left:1185.4px;top:707.6px" width="18" height="18" viewBox="0 0 18 18"><path d="M2.2 10.4 L6.9 13.2 L15.6 4.8" fill="none" stroke="#fff" stroke-width="2.4" stroke-linejoin="round"/></svg>
<div class="a" style="left:1211px;top:708px;width:1px;height:18px;background:#ececec"></div>
<div class="t" style="left:1224px;top:707.8px;font-size:18.4px;color:#2b2f3a">Grid Lines</div>
<div class="a" style="left:1185.4px;top:741px;width:18px;height:18px;border-radius:2.5px;background:#08aa50"></div>
<svg class="a" style="left:1185.4px;top:741px" width="18" height="18" viewBox="0 0 18 18"><path d="M2.2 10.4 L6.9 13.2 L15.6 4.8" fill="none" stroke="#fff" stroke-width="2.4" stroke-linejoin="round"/></svg>
<div class="a" style="left:1211px;top:741px;width:1px;height:18px;background:#ececec"></div>
<div class="t" style="left:1224px;top:741.2px;font-size:18.4px;color:#2b2f3a">Labels</div>
<div class="a" style="left:1185.4px;top:785.7px;width:18px;height:18px;border-radius:3px;border:1.5px solid #4f5a78;background:#fff"></div>
<div class="a" style="left:1211px;top:776.5px;width:1px;height:38.200000000000045px;background:#ececec"></div>
<div class="t" style="left:1224px;top:787.1px;font-size:18.4px;color:#2b2f3a">Title</div>
<div class="a" style="left:1305px;top:777.2px;width:176px;height:35.09999999999991px;border:1.2px solid #dcdcdc;background:#fff"></div>
<div class="t" style="left:1320.7px;top:785.9px;font-size:18.4px;color:#566487">Project Name</div>
<div class="t" style="left:1185px;top:844.6px;font-size:18.4px;color:#2b2f3a">Y-Axis</div>
<div class="a" style="left:1453px;top:846.6px;width:29px;height:13px;border-radius:6.5px;background:#08aa50"></div>
<div class="a" style="left:1466.5px;top:845.6px;width:15px;height:15px;border-radius:50%;background:#fff;border:1.2px solid #cdd0d6"></div>
<div class="a" style="left:1176.5px;top:873.4px;width:312px;height:260px;border:1.3px solid #d8d8d8;background:#fff"></div>
<div class="a" style="left:1178px;top:908px;width:309px;height:1px;background:#efefef"></div>
<div class="a" style="left:1178px;top:941.5px;width:309px;height:1px;background:#efefef"></div>
<div class="a" style="left:1178px;top:975px;width:309px;height:1px;background:#efefef"></div>
<div class="a" style="left:1178px;top:1032px;width:309px;height:1px;background:#efefef"></div>
<div class="a" style="left:1185.4px;top:883.6px;width:18px;height:18px;border-radius:2.5px;background:#08aa50"></div>
<svg class="a" style="left:1185.4px;top:883.6px" width="18" height="18" viewBox="0 0 18 18"><path d="M2.2 10.4 L6.9 13.2 L15.6 4.8" fill="none" stroke="#fff" stroke-width="2.4" stroke-linejoin="round"/></svg>
<div class="a" style="left:1211px;top:884px;width:1px;height:18px;background:#ececec"></div>
<div class="t" style="left:1224px;top:883.8px;font-size:18.4px;color:#2b2f3a">Grid Lines</div>
<div class="a" style="left:1185.4px;top:917px;width:18px;height:18px;border-radius:3px;border:1.5px solid #4f5a78;background:#fff"></div>
<div class="a" style="left:1211px;top:917px;width:1px;height:18px;background:#ececec"></div>
<div class="t" style="left:1224px;top:917.4px;font-size:18.4px;color:#2b2f3a">Logarithmic</div>
<div class="a" style="left:1185.4px;top:950.3px;width:18px;height:18px;border-radius:2.5px;background:#08aa50"></div>
<svg class="a" style="left:1185.4px;top:950.3px" width="18" height="18" viewBox="0 0 18 18"><path d="M2.2 10.4 L6.9 13.2 L15.6 4.8" fill="none" stroke="#fff" stroke-width="2.4" stroke-linejoin="round"/></svg>
<div class="a" style="left:1211px;top:950px;width:1px;height:18px;background:#ececec"></div>
<div class="t" style="left:1224px;top:950.7px;font-size:18.4px;color:#2b2f3a">Labels</div>
<div class="a" style="left:1185.4px;top:995.2px;width:18px;height:18px;border-radius:3px;border:1.5px solid #4f5a78;background:#fff"></div>
<div class="a" style="left:1211px;top:986px;width:1px;height:37.60000000000002px;background:#ececec"></div>
<div class="t" style="left:1224px;top:996.7px;font-size:18.4px;color:#2b2f3a">Title</div>
<div class="a" style="left:1305px;top:986.2px;width:176px;height:35.59999999999991px;border:1.2px solid #dcdcdc;background:#fff"></div>
<div class="a" style="left:1211px;top:1042px;width:1px;height:38px;background:#ececec"></div>
<div class="t" style="left:1218.5px;top:1054.1px;font-size:18.4px;color:#2b2f3a">Min</div>
<div class="a" style="left:1302.4px;top:1043.5px;width:178.5999999999999px;height:35.59999999999991px;border:1.2px solid #dcdcdc;background:#fff"></div>
<div class="t" style="left:1317.6px;top:1053.5px;font-size:18.4px;color:#566487">Auto</div>
<div class="a" style="left:1211px;top:1098px;width:1px;height:19px;background:#ececec"></div>
<div class="a" style="left:1302.4px;top:1099.5px;width:178.5999999999999px;height:35.5px;border:1.2px solid #dcdcdc;background:#fff"></div>
<div class="a" style="left:1166px;top:1080px;width:334px;height:24.5px;background:linear-gradient(rgba(250,250,250,0),rgba(248,248,248,0.7))"></div>
<div class="a" style="left:1166px;top:1104.5px;width:334px;height:13px;background:linear-gradient(#f0f0f0,#ebebeb)"></div>
<div class="a" style="left:0;top:0;width:1500px;height:1117px;border-top:1px solid #000;border-left:1.5px solid #000;border-right:1px solid #000;border-bottom:1.5px solid #000;pointer-events:none"></div>
<svg class="a" style="left:1490px;top:1107px" width="10" height="10" viewBox="0 0 10 10"><path d="M10 0 V10 H0 V9 Q9 9 9 0 Z" fill="#000"/></svg>
</body></html>
